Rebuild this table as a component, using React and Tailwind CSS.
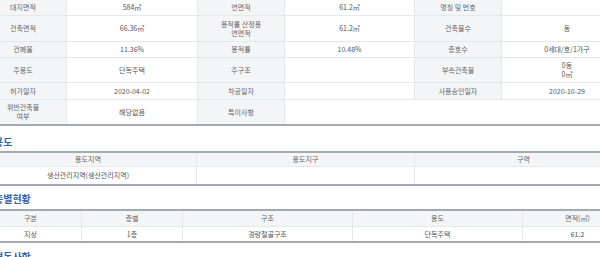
import React from 'react';

const FONT = "font-['Noto_Sans_CJK_KR',sans-serif]";

// top summary table, 6 columns: label / value pairs
const SUMMARY = [
  ['대지면적', '584㎡', '연면적', '61.2㎡', '명칭 및 번호', ''],
  ['건축면적', '66.36㎡', '용적률 산정용\n연면적', '61.2㎡', '건축물수', '동'],
  ['건폐율', '11.36%', '용적률', '10.48%', '총호수', '0세대/호/1가구'],
  ['주용도', '단독주택', '주구조', '', '부속건축물', '0동\n0㎡'],
  ['허가일자', '2020-04-02', '착공일자', '', '사용승인일자', '2020-10-29'],
];

const Cell = ({ children, label, last, edge, span3 }) => (
  <div
    className={[
      'flex items-center justify-center text-center whitespace-pre-line leading-[9px]',
      label ? 'bg-[#f4f5f7] text-[#666]' : 'bg-white text-[#555]',
      last ? '' : 'border-b border-[#e6e8ec]',
      edge ? '' : 'border-r border-[#e6e8ec]',
      span3 ? 'col-span-3' : '',
    ].join(' ')}
  >
    {children}
  </div>
);

const Heading = ({ children, className }) => (
  <div className={`pl-[14px] text-[10px] leading-[14px] font-bold text-[#3466b0] ${className}`}>{children}</div>
);

export default function App() {
  return (
    <div className={`w-[600px] h-[257px] overflow-hidden bg-white ${FONT} text-[7px]`}>
      <div className="w-[652px] -ml-[20px]">
        {/* 건축물 개요 */}
        <div className="grid grid-cols-[87px_131px_87px_130px_87px_130px] grid-rows-[16px_26px_16px_25px_17px_24px] border-b-2 border-[#a3aab4]">
          {SUMMARY.map((row, r) =>
            row.map((v, c) => (
              <Cell key={`${r}-${c}`} label={c % 2 === 0} edge={c === 5}>{v}</Cell>
            ))
          )}
          <Cell label last>{'위반건축물\n여부'}</Cell>
          <Cell last>해당없음</Cell>
          <Cell label last>특이사항</Cell>
          <Cell last edge span3></Cell>
        </div>

        {/* 용도 */}
        <Heading className="mt-[9px] mb-[2px]">용도</Heading>
        <div className="grid grid-cols-[217px_218px_217px] grid-rows-[14px_17px] border-y-2 border-[#a3aab4]">
          <Cell label>용도지역</Cell>
          <Cell label>용도지구</Cell>
          <Cell label edge>구역</Cell>
          <Cell last>생산관리지역(생산관리지역)</Cell>
          <Cell last></Cell>
          <Cell last edge></Cell>
        </div>

        {/* 층별현황 */}
        <Heading className="mt-[6px] mb-[3px]">층별현황</Heading>
        <div className="grid grid-cols-[102px_101px_170px_170px_109px] grid-rows-[16px_14px] border-y-2 border-[#a3aab4]">
          <Cell label>구분</Cell>
          <Cell label>층별</Cell>
          <Cell label>구조</Cell>
          <Cell label>용도</Cell>
          <Cell label edge>면적(㎡)</Cell>
          <Cell last>지상</Cell>
          <Cell last>1층</Cell>
          <Cell last>경량철골구조</Cell>
          <Cell last>단독주택</Cell>
          <Cell last edge>61.2</Cell>
        </div>

        <Heading className="mt-[7px]">변동사항</Heading>
      </div>
    </div>
  );
}
